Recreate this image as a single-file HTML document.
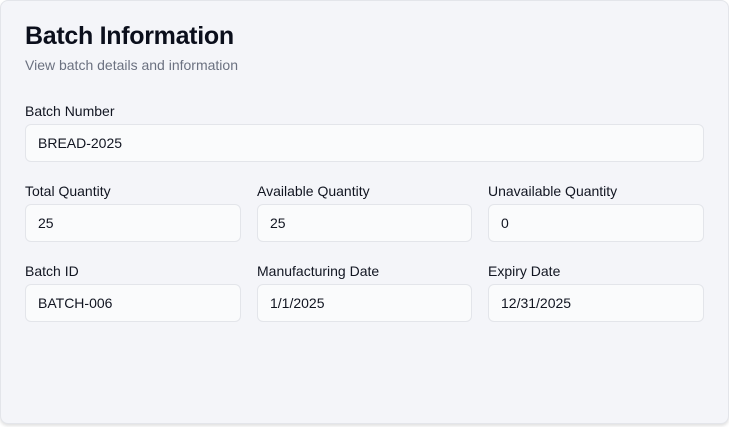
<!DOCTYPE html>
<html><head><style>
html,body{margin:0;padding:0;background:#fff;}
body{width:729px;height:427px;overflow:hidden;font-family:"Liberation Sans",Arial,sans-serif;}
.card{position:absolute;left:0;top:0;width:727px;height:422px;background:#f4f5f9;border:1px solid #e3e5ea;border-radius:8px;box-shadow:0 2px 3px rgba(0,0,0,0.12);}
h1{position:absolute;left:24px;top:21px;margin:0;font-size:25px;font-weight:bold;color:#0b0f1c;letter-spacing:-0.3px;}
.sub{position:absolute;left:24px;top:56px;font-size:14px;color:#6b7180;}
.lbl{position:absolute;font-size:14px;color:#111521;}
.in{position:absolute;height:38px;box-sizing:border-box;background:#fafbfc;border:1px solid #e3e5ea;border-radius:6px;font-size:14px;color:#111521;padding-left:12px;line-height:37px;}
</style></head><body>
<div class="card">
<h1>Batch Information</h1>
<div class="sub">View batch details and information</div>
<div class="lbl" style="left:24px;top:102px">Batch Number</div>
<div class="in" style="left:24px;top:123px;width:679px">BREAD-2025</div>

<div class="lbl" style="left:24px;top:182px">Total Quantity</div>
<div class="lbl" style="left:256px;top:182px">Available Quantity</div>
<div class="lbl" style="left:487px;top:182px">Unavailable Quantity</div>
<div class="in" style="left:24px;top:203px;width:216px">25</div>
<div class="in" style="left:256px;top:203px;width:215px">25</div>
<div class="in" style="left:487px;top:203px;width:216px">0</div>

<div class="lbl" style="left:24px;top:262px">Batch ID</div>
<div class="lbl" style="left:256px;top:262px">Manufacturing Date</div>
<div class="lbl" style="left:487px;top:262px">Expiry Date</div>
<div class="in" style="left:24px;top:283px;width:216px">BATCH-006</div>
<div class="in" style="left:256px;top:283px;width:215px">1/1/2025</div>
<div class="in" style="left:487px;top:283px;width:216px">12/31/2025</div>
</div>
</body></html>
